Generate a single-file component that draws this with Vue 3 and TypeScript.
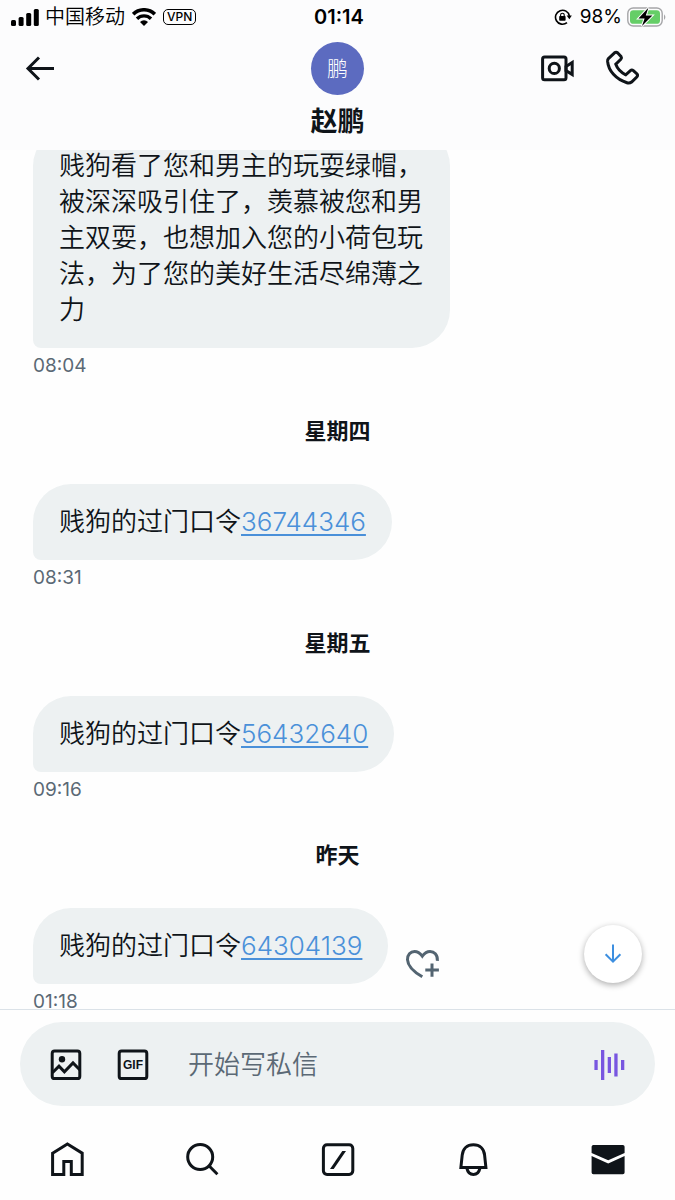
<script setup lang="ts">
import { nextTick, onMounted, ref } from 'vue'

interface Message {
  id: number
  day?: string
  text: string
  code?: string
  time: string
  reactable?: boolean
}

const messages: Message[] = [
  {
    id: 1,
    text: '贱狗看了您和男主的玩耍绿帽，被深深吸引住了，羡慕被您和男主双耍，也想加入您的小荷包玩法，为了您的美好生活尽绵薄之力',
    time: '08:04',
  },
  { id: 2, day: '星期四', text: '贱狗的过门口令', code: '36744346', time: '08:31' },
  { id: 3, day: '星期五', text: '贱狗的过门口令', code: '56432640', time: '09:16' },
  { id: 4, day: '昨天', text: '贱狗的过门口令', code: '64304139', time: '01:18', reactable: true },
]

const savedScroll = 22

const draft = ref('')
const thread = ref<HTMLElement | null>(null)

function scrollToEnd() {
  if (thread.value) thread.value.scrollTop = thread.value.scrollHeight
}

onMounted(async () => {
  await nextTick()
  if (thread.value) thread.value.scrollTop = savedScroll
})
</script>

<template>
  <div class="screen" lang="zh-CN">
    <header class="top">
      <div class="status">
        <div class="status-left">
          <svg class="signal" viewBox="0 0 28 18" aria-hidden="true">
            <rect x="0" y="12" width="5" height="6" rx="1.5" />
            <rect x="7.6" y="9" width="5" height="9" rx="1.5" />
            <rect x="15.2" y="5" width="5" height="13" rx="1.5" />
            <rect x="22.8" y="1" width="5" height="17" rx="1.5" />
          </svg>
          <span class="carrier">中国移动</span>
          <svg class="wifi" viewBox="0 0 24 18" aria-hidden="true">
            <path d="M1.2 6.2a15.4 15.4 0 0 1 21.6 0" fill="none" stroke="#000" stroke-width="3.6" />
            <path d="M5 10.8a9.8 9.8 0 0 1 14 0" fill="none" stroke="#000" stroke-width="3.4" />
            <path d="M12 18l-4-4.1a5.7 5.7 0 0 1 8 0z" />
          </svg>
          <span class="vpn">VPN</span>
        </div>
        <span class="clock">01:14</span>
        <div class="status-right">
          <svg class="lock" viewBox="0 0 18 18" aria-hidden="true">
            <path d="M13 14.6A7 7 0 1 1 15.4 8" fill="none" stroke="#000" stroke-width="1.6" />
            <path d="M12.6 7.6h5.2l-2.4 3.6z" />
            <rect x="5.2" y="8" width="6.4" height="4.8" rx="0.8" />
            <path d="M6.6 8.4V7a1.8 1.8 0 0 1 3.6 0v1.4" fill="none" stroke="#000" stroke-width="1.1" />
          </svg>
          <span class="percent">98%</span>
          <svg class="battery" viewBox="0 0 40 20" aria-hidden="true">
            <rect x="0.8" y="1" width="34.4" height="18" rx="5.4" fill="none" stroke="#a5a5a8" stroke-width="1.4" />
            <rect x="3" y="3.2" width="30" height="13.6" rx="3.4" fill="#65ce67" />
            <path d="M37 7.2q2.8 2.8 0 5.8z" fill="#a5a5a8" />
            <path d="M21.4 .8L11.4 11.4h6.2L15 19 25.4 8.4h-6.6z" fill="#000" stroke="#fff" stroke-width="2" paint-order="stroke" />
          </svg>
        </div>
      </div>
      <div class="bar">
        <button class="icon-btn" type="button" aria-label="返回">
          <svg class="icon" viewBox="0 0 40 40" aria-hidden="true">
            <path class="line" d="M34 20.5H8M19 9.5L8 20.5l11 11" />
          </svg>
        </button>
        <div class="avatar">鹏</div>
        <div class="calls">
          <button class="icon-btn" type="button" aria-label="视频通话">
            <svg class="icon" viewBox="0 0 40 40" aria-hidden="true">
              <rect class="line" x="4.6" y="9" width="23.4" height="22.8" rx="2" />
              <circle class="line" cx="16.3" cy="20.4" r="5.1" />
              <path class="line" d="M28 18.6l6.2-4v12l-6.2-4z" />
            </svg>
          </button>
          <button class="icon-btn" type="button" aria-label="语音通话">
            <svg class="icon" viewBox="0 0 40 40" aria-hidden="true">
              <path
                class="line"
                d="M5.4 10.6L11.5 4.8Q13.2 3.6 14.8 5L18 8.4Q19 9.8 17.8 11.2L12.8 16.2Q15.2 23 22.8 26.8L27.4 22.6Q28.8 21.4 30.4 22.6L34 26Q35.2 27.6 33.8 29L28.6 34Q26.5 35.6 24 34.8C13 31.4 5.4 22.8 4.6 13.4Q4.5 11.6 5.4 10.6z"
              />
            </svg>
          </button>
        </div>
      </div>
      <h1 class="name">赵鹏</h1>
    </header>

    <div class="body">
      <main ref="thread" class="thread">
        <section v-for="m in messages" :key="m.id">
          <h2 v-if="m.day" class="day">{{ m.day }}</h2>
          <div class="row">
            <p class="bubble">{{ m.text }}<a v-if="m.code" class="code" href="#">{{ m.code }}</a></p>
            <button v-if="m.reactable" class="icon-btn react" type="button" aria-label="添加回应">
              <svg class="icon" viewBox="0 0 40 40" aria-hidden="true">
                <path
                  class="line"
                  d="M35.4 16.8C35.8 10.5 32 7.5 28 7.5c-3.5 0-5.7 2-7.7 4.7-2-2.7-4.3-4.7-7.8-4.7-4 0-7.2 3.2-7 8.2.3 7 7 12.5 14.8 17.1M30 19.4v13.4M23.3 26.1h13.6"
                />
              </svg>
            </button>
          </div>
          <time class="time">{{ m.time }}</time>
        </section>
      </main>
      <button class="jump" type="button" aria-label="滚动到底部" @click="scrollToEnd">
        <svg class="jump-icon" viewBox="0 0 24 24" aria-hidden="true">
          <path d="M12 2.6v17M4.6 12.2l7.4 7.4 7.4-7.4" />
        </svg>
      </button>
    </div>

    <footer class="bottom">
      <form class="composer" @submit.prevent>
        <button class="icon-btn" type="button" aria-label="图片">
          <svg class="icon" viewBox="0 0 40 40" aria-hidden="true">
            <rect class="line" x="6.2" y="7" width="27.6" height="27.6" rx="2.4" />
            <circle cx="16" cy="15.2" r="3.2" />
            <path class="line" d="M6.4 28.8l6.6-6.6 5.4 5.6L27 19l7 7" />
          </svg>
        </button>
        <button class="icon-btn gif" type="button" aria-label="GIF">
          <svg class="icon" viewBox="0 0 40 40" aria-hidden="true">
            <rect class="line" x="6.2" y="7" width="27.6" height="27.6" rx="2.4" />
            <text x="20" y="25" text-anchor="middle">GIF</text>
          </svg>
        </button>
        <input v-model="draft" class="field" type="text" placeholder="开始写私信" aria-label="开始写私信" />
        <button class="icon-btn voice" type="button" aria-label="语音消息">
          <svg class="icon" viewBox="0 0 40 40" aria-hidden="true">
            <path d="M5.4 16h3.3v10H5.4zM12 6h3.3v30H12zM18.7 13h3.3v16h-3.3zM25.3 9.4h3.3v23.2h-3.3zM32 16h3.3v10H32z" />
          </svg>
        </button>
      </form>
      <nav class="tabs" aria-label="主导航">
        <a class="tab" href="#" aria-label="主页">
          <svg class="icon" viewBox="0 0 40 40" aria-hidden="true">
            <path class="line" d="M4.6 14.2L19.4 4.9 34.2 14.2V35.4H23.3V22.5H15.8V35.4H4.6z" />
          </svg>
        </a>
        <a class="tab" href="#" aria-label="搜索">
          <svg class="icon" viewBox="0 0 40 40" aria-hidden="true">
            <circle class="line" cx="17.2" cy="18" r="12.5" />
            <path class="line" d="M26 26.8l8.4 8.4" />
          </svg>
        </a>
        <a class="tab" href="#" aria-label="撰写">
          <svg class="icon" viewBox="0 0 40 40" aria-hidden="true">
            <rect class="line" x="5.4" y="5.8" width="29.4" height="29.6" rx="3.6" />
            <path d="M12 30L24.3 12H28L15.7 30z" />
          </svg>
        </a>
        <a class="tab" href="#" aria-label="通知">
          <svg class="icon" viewBox="0 0 40 40" aria-hidden="true">
            <path class="line" d="M7.9 28.4L9.2 16.2C9.8 9.8 14 5.8 20.4 5.8S31 9.8 31.6 16.2l1.3 12.2zM14 29.6c.8 3.8 3.2 5.8 6.4 5.8s5.6-2 6.4-5.8" />
          </svg>
        </a>
        <a class="tab" href="#" aria-label="私信" aria-current="page">
          <svg class="icon" viewBox="0 0 40 40" aria-hidden="true">
            <path d="M5.4 6h29.4a1.8 1.8 0 0 1 1.8 1.8v6.2L20.2 21.2 3.6 14V7.8A1.8 1.8 0 0 1 5.4 6zM3.6 17l16.6 7.4L36.6 17v16.4a1.8 1.8 0 0 1-1.8 1.8H5.4a1.8 1.8 0 0 1-1.8-1.8z" />
          </svg>
        </a>
      </nav>
    </footer>
  </div>
</template>

<style>
body {
  margin: 0;
  background: #fefefe;
}
</style>

<style scoped>
.screen {
  display: flex;
  flex-direction: column;
  height: 100vh;
  color: #0f1419;
  font-family: Inter, 'Noto Sans CJK SC', sans-serif;
}

.screen * {
  box-sizing: border-box;
}

.top {
  flex: none;
  padding-bottom: 8px;
  background: #fcfcfd;
}

.status {
  display: grid;
  grid-template-columns: 1fr auto 1fr;
  align-items: center;
  height: 34px;
  padding: 0 8px 0 11px;
  color: #000;
  font-size: 20px;
  line-height: 24px;
}

.status-left,
.status-right {
  display: flex;
  align-items: center;
}

.status-right {
  justify-content: flex-end;
}

.signal {
  width: 28px;
  height: 18px;
}

.carrier {
  margin: 0 7px 0 6px;
  font-weight: 350;
}

.wifi {
  width: 24px;
  height: 18px;
}

.vpn {
  margin-left: 7px;
  padding: 0 3px;
  border: 1px solid #000;
  border-radius: 5px;
  font-size: 12px;
  font-weight: 500;
  line-height: 14px;
}

.clock {
  font-weight: 600;
}

.lock {
  width: 18px;
  height: 18px;
  margin-right: 8px;
}

.percent {
  margin-right: 5px;
  font-size: 19px;
}

.battery {
  width: 40px;
  height: 20px;
}

.bar {
  display: grid;
  grid-template-columns: 1fr auto 1fr;
  align-items: center;
  height: 68px;
  padding: 0 32px 0 20px;
}

.calls {
  display: flex;
  justify-content: flex-end;
  gap: 25px;
}

.avatar {
  width: 53px;
  height: 53px;
  margin-left: 12px;
  border-radius: 50%;
  background: #5c6bc0;
  color: #fff;
  font-size: 21px;
  font-weight: 300;
  line-height: 53px;
  text-align: center;
}

.name {
  margin: 0;
  font-size: 27px;
  font-weight: 700;
  line-height: 40px;
  text-align: center;
}

.icon-btn {
  flex: none;
  display: block;
  width: 40px;
  height: 40px;
  padding: 0;
  border: 0;
  background: none;
  color: inherit;
}

.icon {
  display: block;
  width: 40px;
  height: 40px;
  fill: currentColor;
}

.line {
  fill: none;
  stroke: currentColor;
  stroke-width: 3;
}

.body {
  position: relative;
  flex: 1;
  min-height: 0;
}

.thread {
  height: 100%;
  padding: 0 33px;
  overflow-y: auto;
  scrollbar-width: none;
}

.day {
  margin: 33px 0 39px;
  font-size: 22px;
  font-weight: 700;
  line-height: 28px;
  text-align: center;
}

.row {
  display: flex;
  align-items: flex-end;
  gap: 14px;
}

.bubble {
  max-width: 417px;
  margin: 0;
  padding: 20px 26px;
  border-radius: 38px 38px 38px 8px;
  background: #edf1f2;
  font-size: 26px;
  font-weight: 350;
  line-height: 36px;
}

.code {
  color: #4a90d9;
  text-decoration: underline;
  text-decoration-thickness: 2px;
  text-underline-offset: 3px;
}

.react {
  color: #536471;
}

.time {
  display: block;
  height: 36px;
  color: #5b6975;
  font-size: 19px;
  line-height: 36px;
}

.jump {
  position: absolute;
  right: 33px;
  bottom: 26px;
  display: grid;
  place-items: center;
  width: 58px;
  height: 58px;
  padding: 0;
  border: 0;
  border-radius: 50%;
  background: #fff;
  box-shadow: 0 2px 6px rgba(0, 0, 0, 0.32);
}

.jump-icon {
  width: 24px;
  height: 24px;
  fill: none;
  stroke: #3d8fe0;
  stroke-width: 2;
}

.bottom {
  flex: none;
  border-top: 1px solid #dbe2e8;
}

.composer {
  display: flex;
  align-items: center;
  height: 84px;
  margin: 12px 20px 0;
  padding: 0 26px;
  border-radius: 42px;
  background: #edf1f2;
}

.gif {
  margin-left: 27px;
}

.gif text {
  font-size: 12px;
  font-weight: 800;
}

.field {
  flex: 1;
  min-width: 0;
  margin: 0 16px 0 35px;
  padding: 2px 0 0;
  border: 0;
  outline: 0;
  background: none;
  color: inherit;
  font-family: inherit;
  font-size: 26px;
  font-weight: 350;
  line-height: 36px;
}

.field::placeholder {
  color: #5b6975;
  opacity: 1;
}

.voice {
  color: #7856e0;
}

.tabs {
  display: grid;
  grid-template-columns: repeat(5, 1fr);
  padding: 33px 0 21px;
}

.tab {
  display: grid;
  place-items: center;
  color: inherit;
}
</style>
